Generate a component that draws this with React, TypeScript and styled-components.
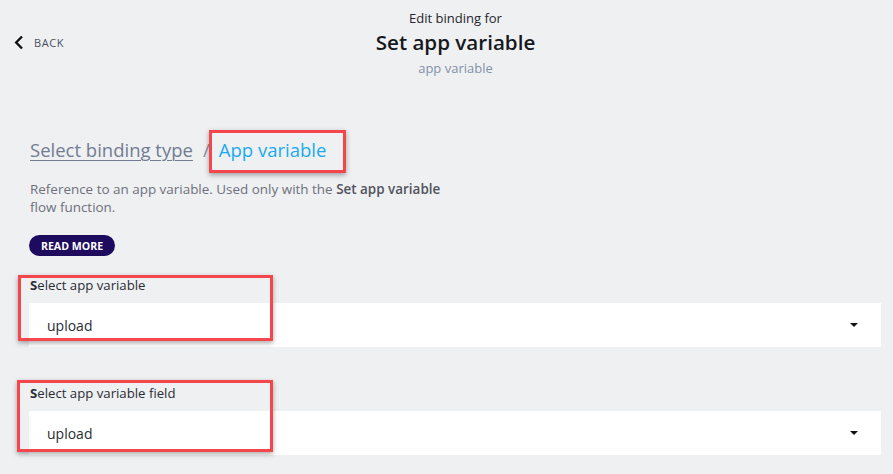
import React from "react";
import styled, { createGlobalStyle } from "styled-components";

const GlobalStyle = createGlobalStyle`
  html, body {
    margin: 0;
    padding: 0;
    background: #eff0f2;
    font-family: "Open Sans", "Liberation Sans", sans-serif;
  }
  * { box-sizing: border-box; }
`;

type Box = { x: number; y: number; w: number; h: number };

// red annotation frames drawn over the screenshot
const marks: Box[] = [
  { x: 209, y: 130, w: 137, h: 43 },
  { x: 18, y: 275, w: 255, h: 66 },
  { x: 17, y: 380, w: 256, h: 72 },
];

const fields = [
  { label: "Select app variable", value: "upload" },
  { label: "Select app variable field", value: "upload" },
];

const App = () => {
  return (
    <Page>
      <GlobalStyle />
      <Header>
        <BackButton>
          <svg width="10" height="15" viewBox="0 0 10 15">
            <path
              d="M8 1.5 L2.2 7.5 L8 13.5"
              fill="none"
              stroke="#111"
              strokeWidth="2.4"
            />
          </svg>
          <span>BACK</span>
        </BackButton>
        <TitleBlock>
          <Kicker>Edit binding for</Kicker>
          <Title>Set app variable</Title>
          <Subtitle>app variable</Subtitle>
        </TitleBlock>
        <div />
      </Header>

      <Content>
        <Breadcrumb>
          <CrumbLink>Select binding type</CrumbLink>
          <Slash>/</Slash>
          <CrumbCurrent>App variable</CrumbCurrent>
        </Breadcrumb>
        <Description>
          Reference to an app variable. Used only with the{" "}
          <b>Set app variable</b>
          <br />
          flow function.
        </Description>
        <Pill>READ MORE</Pill>

        {fields.map((f, i) => (
          <Field key={f.label} $first={i === 0}>
            <Label>
              <b>S</b>
              {f.label.slice(1)}
            </Label>
            <Select>
              <span>{f.value}</span>
              <Caret />
            </Select>
          </Field>
        ))}
      </Content>

      {marks.map((m, i) => (
        <Mark
          key={i}
          style={{ left: m.x, top: m.y, width: m.w, height: m.h }}
        />
      ))}
    </Page>
  );
};

const Page = styled.div`
  position: relative;
  width: 893px;
  height: 474px;
  overflow: hidden;
  background: #eff0f2;
`;

const Header = styled.div`
  display: grid;
  grid-template-columns: 1fr auto 1fr;
  align-items: center;
  padding-top: 10px;
`;

const BackButton = styled.div`
  display: flex;
  align-items: center;
  gap: 10px;
  padding-left: 14px;
  margin-top: -2px;
  span {
    font-size: 11px;
    letter-spacing: 0.6px;
    color: #4b5060;
  }
`;

const TitleBlock = styled.div`
  display: flex;
  flex-direction: column;
  align-items: center;
  margin-left: 18px;
`;

const Kicker = styled.div`
  font-size: 13px;
  line-height: 16px;
  color: #23262c;
`;

const Title = styled.div`
  margin-top: 3px;
  font-size: 20.6px;
  line-height: 26px;
  font-weight: 600;
  color: #16181c;
`;

const Subtitle = styled.div`
  margin-top: 5px;
  font-size: 13px;
  line-height: 16px;
  color: #8390a8;
`;

const Content = styled.div`
  padding: 62px 12px 0 29px;
`;

const Breadcrumb = styled.div`
  display: flex;
  align-items: baseline;
  font-size: 18.5px;
  line-height: 24px;
  padding-left: 1px;
`;

const CrumbLink = styled.span`
  color: #737c93;
  text-decoration: underline;
  text-underline-offset: 3px;
  text-decoration-thickness: 1px;
`;

const Slash = styled.span`
  color: #8a90a0;
  margin: 0 9px 0 10px;
`;

const CrumbCurrent = styled.span`
  color: #19aaf2;
`;

const Description = styled.p`
  margin: 18px 0 0 1px;
  font-size: 13.45px;
  line-height: 18px;
  color: #6d717c;
  b {
    font-weight: 600;
    color: #4f535c;
  }
`;

const Pill = styled.div`
  display: inline-flex;
  align-items: center;
  justify-content: center;
  margin-top: 19px;
  width: 86px;
  height: 21px;
  border-radius: 11px;
  background: #1e0b5e;
  color: #fff;
  font-size: 10.6px;
  font-weight: 700;
`;

const Field = styled.div<{ $first: boolean }>`
  margin-top: ${(p) => (p.$first ? "21px" : "38px")};
`;

const Label = styled.div`
  font-size: 13.2px;
  line-height: 16px;
  color: #2a2d33;
  padding-left: 1px;
  b {
    font-weight: 700;
  }
`;

const Select = styled.div`
  margin-top: 10px;
  height: 44px;
  background: #fff;
  display: flex;
  align-items: center;
  justify-content: space-between;
  padding: 0 23px 0 18px;
  font-size: 14px;
  color: #2a2d33;
`;

const Caret = styled.span`
  width: 0;
  height: 0;
  border-left: 4px solid transparent;
  border-right: 4px solid transparent;
  border-top: 4px solid #111;
`;

const Mark = styled.div`
  position: absolute;
  border: 3px solid #f3474b;
  box-shadow: 0 2px 5px rgba(0, 0, 0, 0.35);
  pointer-events: none;
`;

export default App;
